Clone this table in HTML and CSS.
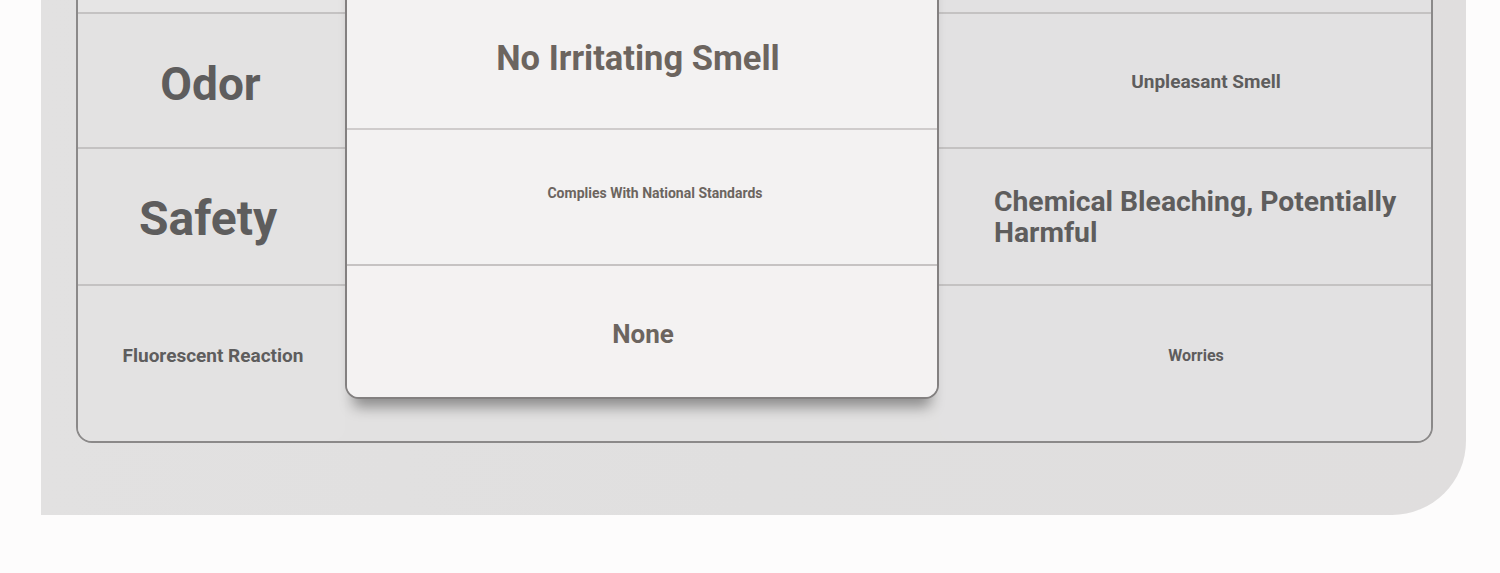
FILE: index.html
```html
<!DOCTYPE html>
<html lang="en">
<head>
<meta charset="utf-8">
<title>Comparison</title>
<link rel="stylesheet" href="styles.css">
</head>
<body>
<div class="page">
  <section class="panel">
    <div class="cmp">
      <div class="col col-left">
        <div class="cell cell-head"></div>
        <div class="cell row-odor"><span class="t-odor">Odor</span></div>
        <div class="cell row-safety"><span class="t-safety">Safety</span></div>
        <div class="cell row-fluo"><span class="t-fluo">Fluorescent Reaction</span></div>
      </div>
      <div class="card">
        <div class="crow crow-head"></div>
        <div class="crow crow-1"><span class="t-smell">No Irritating Smell</span></div>
        <div class="crow crow-2"><span class="t-std">Complies With National Standards</span></div>
        <div class="crow crow-3"><span class="t-none">None</span></div>
      </div>
      <div class="col col-right">
        <div class="cell cell-head"></div>
        <div class="cell row-odor"><span class="t-unpl">Unpleasant Smell</span></div>
        <div class="cell row-safety cell-left"><span class="t-chem">Chemical Bleaching, Potentially Harmful</span></div>
        <div class="cell row-fluo"><span class="t-worries">Worries</span></div>
      </div>
    </div>
  </section>
</div>
</body>
</html>
```
FILE: styles.css
```css
html, body {
  margin: 0;
  padding: 0;
  background: #fdfcfc;
  overflow: hidden;
}
body {
  font-family: Roboto, "Liberation Sans", sans-serif;
  font-weight: 700;
}
.page {
  padding-left: 41px;
  width: 1425px;
}
.panel {
  margin-top: -140px;
  padding: 40px 33px 72px 35px;
  background: linear-gradient(90deg, #e2e1e1 0%, #e0dfdf 50%, #e0dede 100%);
  border-bottom-right-radius: 74px;
}
.cmp {
  display: grid;
  grid-template-columns: 267px 594px 1fr;
  border: 2px solid #8b8989;
  border-radius: 0 0 16px 16px;
  background: #e2e1e1;
}
.col {
  display: flex;
  flex-direction: column;
}
.cell {
  display: flex;
  align-items: center;
  justify-content: center;
  text-align: center;
  border-bottom: 2px solid #c4c2c2;
  color: #5e5d5d;
  background: #e3e2e2;
}
.col-right .cell { background: #e2e1e2; }
.cell-head { height: 110px; background: #e6e5e5; }
.row-odor { height: 131px; padding-top: 2px; }
.row-safety { height: 135px; }
.row-fluo {
  height: 139px;
  padding-bottom: 16px;
  border-bottom: 0;
  border-radius: 0 0 14px 14px;
}
.cell-left {
  justify-content: flex-start;
  text-align: left;
  padding: 0 26px 0 55px;
}
.t-odor { font-size: 46px; padding-right: 2px; padding-top: 4px; }
.t-safety { font-size: 48px; padding-right: 7px; padding-top: 4px; }
.t-fluo { font-size: 19px; padding-left: 3px; }
.t-unpl { font-size: 19px; padding-left: 42px; }
.t-chem { font-size: 28.3px; line-height: 31px; }
.t-worries { font-size: 16px; padding-left: 22px; }

.card {
  margin: -22px 0 42px;
  display: flex;
  flex-direction: column;
  background: #f3f2f2;
  border: 2px solid #838080;
  border-radius: 14px;
  box-shadow: 0 16px 14px -8px rgba(0, 0, 0, 0.38);
  color: #6c655f;
  position: relative;
}
.crow {
  display: flex;
  align-items: center;
  justify-content: center;
  text-align: center;
  border-bottom: 2px solid #cfcccc;
}
.crow-head { height: 110px; }
.crow-1 { height: 126px; padding-bottom: 8px; }
.crow-2 { height: 126px; padding-bottom: 8px; border-bottom-color: #c6c3c3; }
.crow-3 { height: 131px; border-bottom: 0; background: #f4f2f2; border-radius: 0 0 12px 12px; }
.t-smell { font-size: 34.5px; padding-right: 8px; padding-top: 2px; }
.t-std { font-size: 14px; padding-left: 26px; }
.t-none { font-size: 26px; padding-top: 4px; padding-left: 2px; }
```
